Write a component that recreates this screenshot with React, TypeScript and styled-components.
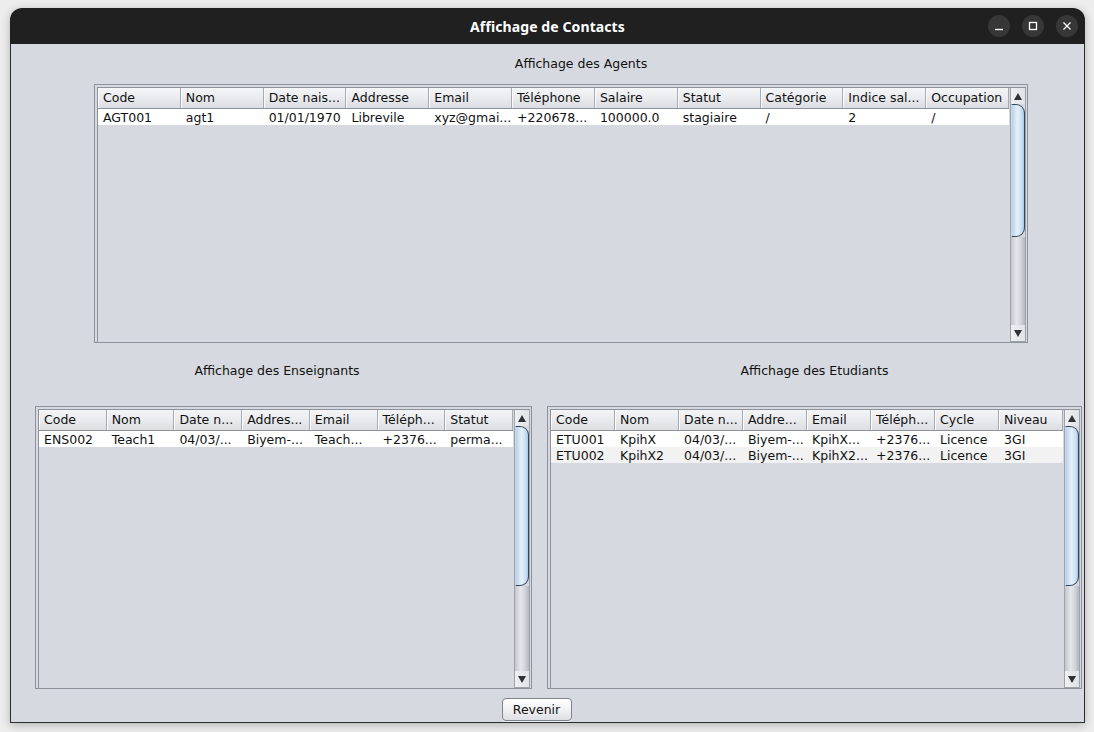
import React from "react";
import styled, { createGlobalStyle } from "styled-components";

const GlobalStyle = createGlobalStyle`
  html, body {
    margin: 0;
    padding: 0;
    background: #ededed;
  }
  body {
    width: 1094px;
    height: 732px;
    overflow: hidden;
    font-family: "DejaVu Sans", "Liberation Sans", sans-serif;
    font-size: 12.5px;
    color: #111;
  }
`;

const Window = styled.div`
  margin: 8px 0 0 10px;
  width: 1075px;
  height: 715px;
  display: flex;
  flex-direction: column;
  border-radius: 12px 12px 0 0;
  box-shadow: 0 2px 10px rgba(0, 0, 0, 0.25);
`;

const TitleBar = styled.div`
  height: 36px;
  flex-shrink: 0;
  background: #202020;
  border-radius: 12px 12px 0 0;
  display: grid;
  grid-template-columns: 1fr auto 1fr;
  align-items: center;
  padding-right: 7px;
  padding-left: 7px;
`;

const Title = styled.div`
  grid-column: 2;
  color: #ffffff;
  font-family: "Noto Sans", "DejaVu Sans", sans-serif;
  font-weight: 700;
  font-size: 14px;
  letter-spacing: 0.1px;
`;

const Controls = styled.div`
  grid-column: 3;
  justify-self: end;
  display: flex;
  gap: 12px;
`;

const CircleButton = styled.div`
  width: 22px;
  height: 22px;
  border-radius: 50%;
  background: #373737;
  display: flex;
  align-items: center;
  justify-content: center;
`;

const Body = styled.div`
  flex: 1;
  background: #d6d9df;
  border: 1px solid #2c2c2c;
  border-top: none;
  display: flex;
  flex-direction: column;
`;

const TopLabelRow = styled.div`
  height: 40px;
  padding-left: 67px;
  padding-bottom: 2px;
  box-sizing: border-box;
  display: flex;
  align-items: center;
  justify-content: center;
`;

const SectionLabel = styled.div`
  font-size: 12.5px;
  line-height: 15px;
  color: #111;
`;

const BottomLabelRow = styled.div`
  height: 63px;
  padding: 20px 0 0 24px;
  box-sizing: border-box;
  display: grid;
  grid-template-columns: 497px 535px;
  column-gap: 15px;
`;

const LabelCell = styled.div<{ $shift: number }>`
  text-align: center;
  padding-right: ${(p) => p.$shift}px;
`;

const TopArea = styled.div`
  padding-left: 83px;
`;

const BottomArea = styled.div`
  padding-left: 24px;
  display: grid;
  grid-template-columns: 497px 535px;
  column-gap: 15px;
`;

const Panel = styled.div<{ $w: number; $h: number }>`
  width: ${(p) => p.$w}px;
  height: ${(p) => p.$h}px;
  box-sizing: border-box;
  border: 1px solid #8e939b;
  padding: 2px 1px 0 2px;
  display: flex;
`;

const ScrollPane = styled.div`
  flex: 1;
  display: flex;
  border-top: 1px solid #8e939b;
  border-left: 1px solid #8e939b;
  min-width: 0;
`;

const Viewport = styled.div`
  flex: 1;
  min-width: 0;
  overflow: hidden;
  margin-right: 1px;
`;

const HeaderRow = styled.div<{ $cols: number }>`
  display: grid;
  grid-template-columns: repeat(${(p) => p.$cols}, 1fr);
  height: 21px;
  box-sizing: border-box;
  border-bottom: 1px solid #8e939b;
  background: linear-gradient(to bottom, #f4f5f7 0%, #e9ebee 50%, #dadde2 100%);
`;

const HeaderCell = styled.div`
  border-right: 1px solid #a6aab2;
  border-left: 1px solid #fbfbfc;
  padding-left: 4px;
  line-height: 19px;
  white-space: nowrap;
  overflow: hidden;
  color: #111;
`;

const DataRow = styled.div<{ $cols: number; $alt: boolean }>`
  display: grid;
  grid-template-columns: repeat(${(p) => p.$cols}, 1fr);
  height: 16px;
  background: ${(p) => (p.$alt ? "#f2f2f2" : "#ffffff")};
`;

const DataCell = styled.div`
  padding-left: 5px;
  padding-top: 1px;
  line-height: 16px;
  white-space: nowrap;
  overflow: hidden;
  color: #111;
`;

const ScrollBar = styled.div`
  width: 16px;
  flex-shrink: 0;
  box-sizing: border-box;
  border: 1px solid #9ea2a9;
  border-top: none;
  display: flex;
  flex-direction: column;
`;

const ArrowButton = styled.div`
  height: 16px;
  flex-shrink: 0;
  background: linear-gradient(to right, #eef0f3, #dfe2e6);
  display: flex;
  align-items: center;
  justify-content: center;
`;

const ArrowUp = styled.div`
  width: 0;
  height: 0;
  border-left: 4px solid transparent;
  border-right: 4px solid transparent;
  border-bottom: 7px solid #2e3238;
`;

const ArrowDown = styled.div`
  width: 0;
  height: 0;
  border-left: 4px solid transparent;
  border-right: 4px solid transparent;
  border-top: 7px solid #2e3238;
`;

const Thumb = styled.div<{ $h: number }>`
  height: ${(p) => p.$h}px;
  flex-shrink: 0;
  box-sizing: border-box;
  border: 1px solid #33465a;
  border-left: 1px solid #c7d8ea;
  border-radius: 0 9px 9px 0;
  background: linear-gradient(to right, #b9d2ea 0%, #e6f0fa 45%, #cadff2 80%, #a9c5e1 100%);
`;

const Track = styled.div`
  flex: 1;
  background: linear-gradient(to right, #c3c6cc 0%, #e4e6ea 40%, #d2d5da 70%, #b3b6bc 100%);
`;

const ButtonRow = styled.div`
  display: flex;
  justify-content: center;
  padding-top: 9px;
  padding-right: 22px;
`;

const PushButton = styled.button`
  width: 70px;
  height: 23px;
  box-sizing: border-box;
  border: 1px solid #7f848c;
  border-radius: 4px;
  background: linear-gradient(to bottom, #ffffff 0%, #f1f2f4 50%, #dcdfe4 100%);
  font-family: "DejaVu Sans", sans-serif;
  font-size: 12.5px;
  color: #111;
  padding: 0;
  box-shadow: 0 1px 0 rgba(255, 255, 255, 0.6);
`;

type TableProps = {
  width: number;
  height: number;
  columns: string[];
  rows: string[][];
  thumb: number;
};

const Table: React.FC<TableProps> = ({ width, height, columns, rows, thumb }) => (
  <Panel $w={width} $h={height}>
    <ScrollPane>
      <Viewport>
        <HeaderRow $cols={columns.length}>
          {columns.map((c) => (
            <HeaderCell key={c}>{c}</HeaderCell>
          ))}
        </HeaderRow>
        {rows.map((r, i) => (
          <DataRow key={i} $cols={columns.length} $alt={i % 2 === 1}>
            {r.map((v, j) => (
              <DataCell key={j}>{v}</DataCell>
            ))}
          </DataRow>
        ))}
      </Viewport>
      <ScrollBar>
        <ArrowButton>
          <ArrowUp />
        </ArrowButton>
        <Thumb $h={thumb} />
        <Track />
        <ArrowButton>
          <ArrowDown />
        </ArrowButton>
      </ScrollBar>
    </ScrollPane>
  </Panel>
);

const agentCols = [
  "Code",
  "Nom",
  "Date nais...",
  "Addresse",
  "Email",
  "Téléphone",
  "Salaire",
  "Statut",
  "Catégorie",
  "Indice sal...",
  "Occupation",
];
const agentRows = [
  ["AGT001", "agt1", "01/01/1970", "Librevile", "xyz@gmai...", "+220678...", "100000.0", "stagiaire", "/", "2", "/"],
];

const teacherCols = ["Code", "Nom", "Date n...", "Addres...", "Email", "Téléph...", "Statut"];
const teacherRows = [["ENS002", "Teach1", "04/03/...", "Biyem-...", "Teach...", "+2376...", "perma..."]];

const studentCols = ["Code", "Nom", "Date n...", "Addre...", "Email", "Téléph...", "Cycle", "Niveau"];
const studentRows = [
  ["ETU001", "KpihX", "04/03/...", "Biyem-...", "KpihX...", "+2376...", "Licence", "3GI"],
  ["ETU002", "KpihX2", "04/03/...", "Biyem-...", "KpihX2...", "+2376...", "Licence", "3GI"],
];

const App: React.FC = () => (
  <>
    <GlobalStyle />
    <Window>
      <TitleBar>
        <Title>Affichage de Contacts</Title>
        <Controls>
          <CircleButton>
            <svg width="10" height="10" viewBox="0 0 10 10">
              <line x1="1" y1="8.5" x2="9" y2="8.5" stroke="#fff" strokeWidth="1.3" />
            </svg>
          </CircleButton>
          <CircleButton>
            <svg width="10" height="10" viewBox="0 0 10 10">
              <rect x="1.5" y="1.5" width="7" height="7" fill="none" stroke="#fff" strokeWidth="1.3" />
            </svg>
          </CircleButton>
          <CircleButton>
            <svg width="10" height="10" viewBox="0 0 10 10">
              <path d="M1.5 1.5 L8.5 8.5 M8.5 1.5 L1.5 8.5" stroke="#fff" strokeWidth="1.3" />
            </svg>
          </CircleButton>
        </Controls>
      </TitleBar>
      <Body>
        <TopLabelRow>
          <SectionLabel>Affichage des Agents</SectionLabel>
        </TopLabelRow>
        <TopArea>
          <Table width={934} height={259} columns={agentCols} rows={agentRows} thumb={133} />
        </TopArea>
        <BottomLabelRow>
          <LabelCell $shift={13}>
            <SectionLabel>Affichage des Enseignants</SectionLabel>
          </LabelCell>
          <LabelCell $shift={0}>
            <SectionLabel>Affichage des Etudiants</SectionLabel>
          </LabelCell>
        </BottomLabelRow>
        <BottomArea>
          <Table width={497} height={283} columns={teacherCols} rows={teacherRows} thumb={160} />
          <Table width={535} height={283} columns={studentCols} rows={studentRows} thumb={160} />
        </BottomArea>
        <ButtonRow>
          <PushButton>Revenir</PushButton>
        </ButtonRow>
      </Body>
    </Window>
  </>
);

export default App;
